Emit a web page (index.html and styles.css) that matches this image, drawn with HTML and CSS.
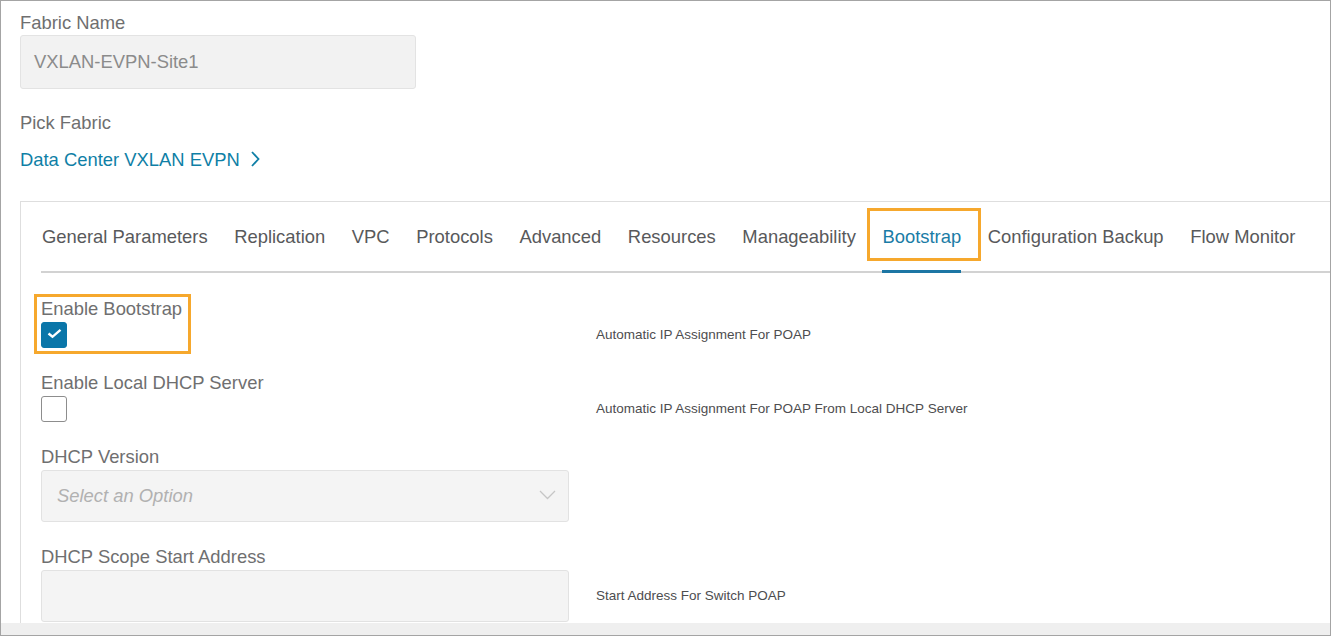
FILE: index.html
```html
<!DOCTYPE html>
<html>
<head>
    <title>Edit Fabric - Bootstrap</title>
    <link rel="stylesheet" href="styles.css">
</head>
<body>
    <div class="window">
        <div class="page">
            <div class="field">
                <label class="label">Fabric Name</label>
                <div class="name-input">VXLAN-EVPN-Site1</div>
            </div>

            <div class="field pick">
                <label class="label">Pick Fabric</label>
                <a class="fabric-link" href="#">Data Center VXLAN EVPN
                    <svg class="chev" width="12" height="18" viewBox="0 0 12 18">
                        <path d="M3 2 L9.5 9 L3 16" fill="none" stroke="#0f7fa6" stroke-width="1.8"/>
                    </svg>
                </a>
            </div>

            <div class="panel">
                <nav class="tabs">
                    <span class="tab">General Parameters</span>
                    <span class="tab">Replication</span>
                    <span class="tab">VPC</span>
                    <span class="tab">Protocols</span>
                    <span class="tab">Advanced</span>
                    <span class="tab">Resources</span>
                    <span class="tab">Manageability</span>
                    <span class="tab active">Bootstrap<span class="mark tab-mark"></span></span>
                    <span class="tab">Configuration Backup</span>
                    <span class="tab">Flow Monitor</span>
                </nav>

                <div class="form">
                    <div class="row">
                        <span class="mark row-mark"></span>
                        <label class="label">Enable Bootstrap</label>
                        <span class="checkbox checked">
                            <svg width="26" height="26" viewBox="0 0 26 26">
                                <path d="M7.5 11.5 L11.5 14.8 L19.5 7.8" fill="none" stroke="#fff" stroke-width="2.4"/>
                            </svg>
                        </span>
                        <span class="help">Automatic IP Assignment For POAP</span>
                    </div>

                    <div class="row">
                        <label class="label">Enable Local DHCP Server</label>
                        <span class="checkbox"></span>
                        <span class="help">Automatic IP Assignment For POAP From Local DHCP Server</span>
                    </div>

                    <div class="row">
                        <label class="label">DHCP Version</label>
                        <div class="select">
                            <span class="placeholder">Select an Option</span>
                            <svg width="17" height="10" viewBox="0 0 17 10">
                                <path d="M1 1 L8.5 8.5 L16 1" fill="none" stroke="#c6c6c6" stroke-width="1.3"/>
                            </svg>
                        </div>
                    </div>

                    <div class="row">
                        <label class="label">DHCP Scope Start Address</label>
                        <div class="text-input"></div>
                        <span class="help">Start Address For Switch POAP</span>
                    </div>
                </div>
            </div>
        </div>
        <div class="hscroll"></div>
    </div>
</body>
</html>
```

FILE: styles.css
```css
body {
    margin: 0;
    background-color: #fff;
    font-family: "Liberation Sans", Arial, sans-serif;
}

.window {
    width: 1331px;
    height: 636px;
    box-sizing: border-box;
    border: 1px solid #a4a4a4;
    display: flex;
    flex-direction: column;
    overflow: hidden;
}

.page {
    flex: 1;
    overflow: hidden;
    padding: 11px 0 0 19px;
}

.hscroll {
    height: 12px;
    background-color: #efefef;
}

.label {
    display: block;
    font-size: 18.4px;
    line-height: 21px;
    color: #6f6f70;
}

.field .label {
    margin-bottom: 2px;
}

.name-input {
    width: 396px;
    height: 54px;
    box-sizing: border-box;
    padding: 0 13px;
    background-color: #f2f2f2;
    border: 1px solid #e3e3e3;
    border-radius: 3px;
    font-size: 18.4px;
    line-height: 52px;
    color: #8b8b8b;
}

.pick {
    margin-top: 23px;
}

.pick .label {
    margin-bottom: 16px;
}

.fabric-link {
    display: inline-flex;
    align-items: center;
    gap: 9px;
    font-size: 18.4px;
    line-height: 21px;
    color: #0f7fa6;
    text-decoration: none;
}

.chev {
    margin-top: -1px;
}

.panel {
    margin-top: 31px;
    border-top: 1px solid #dedede;
    border-left: 1px solid #dedede;
    padding: 24px 0 0 20px;
    height: 500px;
}

.tabs {
    display: flex;
    border-bottom: 2px solid #d2d2d2;
}

.tab {
    position: relative;
    margin-right: 26.6px;
    margin-bottom: -2px;
    padding-bottom: 23px;
    border-bottom: 3px solid transparent;
    font-size: 18.4px;
    line-height: 21px;
    color: #58595b;
    white-space: nowrap;
}

.tab:first-child {
    margin-left: 1px;
}

.tab.active {
    color: #1a7ca6;
    border-bottom-color: #1c76a4;
}

/* orange call-out frames */
.mark {
    position: absolute;
    border: 3px solid #f6a82d;
    box-sizing: border-box;
}

.tab-mark {
    left: -15px;
    top: -18px;
    width: 114px;
    height: 53px;
}

.row-mark {
    left: -7px;
    top: -4px;
    width: 157px;
    height: 60px;
}

.form {
    display: flex;
    flex-direction: column;
    gap: 24px;
    padding-top: 25px;
}

.row {
    position: relative;
    display: grid;
    grid-template-columns: 528px auto;
    column-gap: 27px;
    row-gap: 3px;
}

.row .label {
    grid-column: 1;
}

.help {
    grid-column: 2;
    grid-row: 2;
    align-self: center;
    margin-top: -1px;
    font-size: 13.5px;
    color: #4d4d4f;
}

.checkbox {
    grid-column: 1;
    width: 26px;
    height: 26px;
    box-sizing: border-box;
    border: 1px solid #8d8d8d;
    border-radius: 3px;
    background-color: #fff;
}

.checkbox svg {
    display: block;
    margin: -1px;
}

.checkbox.checked {
    background-color: #0a76a9;
    border-color: #0a76a9;
}

.select,
.text-input {
    grid-column: 1;
    height: 52px;
    box-sizing: border-box;
    background-color: #f4f4f4;
    border: 1px solid #e2e2e2;
    border-radius: 3px;
}

.select {
    display: flex;
    align-items: center;
    justify-content: space-between;
    padding: 0 12px 0 15px;
}

.placeholder {
    font-size: 18.4px;
    font-style: italic;
    color: #b1b1b1;
}

.select svg {
    margin-top: -2px;
}
```
